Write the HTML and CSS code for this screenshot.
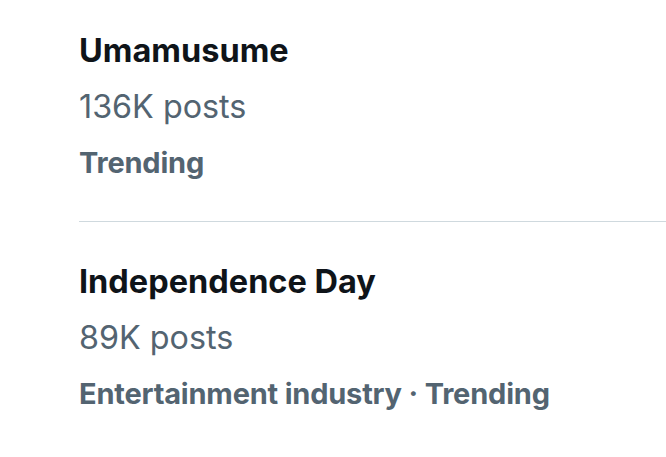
FILE: index.html
```html
<!DOCTYPE html>
<html>
<head>
<meta charset="utf-8">
<link rel="stylesheet" href="styles.css">
</head>
<body>
<div class="list">
  <div class="trend">
    <div class="title">Umamusume</div>
    <div class="count">136K posts</div>
    <div class="meta">Trending</div>
  </div>
  <div class="trend">
    <div class="title">Independence Day</div>
    <div class="count">89K posts</div>
    <div class="meta">Entertainment industry · Trending</div>
  </div>
</div>
</body>
</html>
```
FILE: styles.css
```css
html, body {
  margin: 0;
  padding: 0;
  background: #ffffff;
}
body {
  font-family: Inter, "Noto Sans", sans-serif;
  width: 666px;
  height: 457px;
  overflow: hidden;
}
.list {
  padding-left: 79px;
  padding-top: 23px;
}
.trend {
  display: flex;
  flex-direction: column;
  padding-bottom: 30px;
}
.trend + .trend {
  border-top: 1px solid #cfd9de;
  padding-top: 32px;
}
.title, .count, .meta {
  line-height: 56px;
  white-space: nowrap;
}
.title {
  font-size: 32.5px;
  font-weight: 700;
  color: #0f1419;
}
.count {
  font-size: 32.3px;
  font-weight: 400;
  color: #536471;
}
.meta {
  font-size: 29px;
  font-weight: 700;
  letter-spacing: -0.2px;
  color: #536471;
}
```
